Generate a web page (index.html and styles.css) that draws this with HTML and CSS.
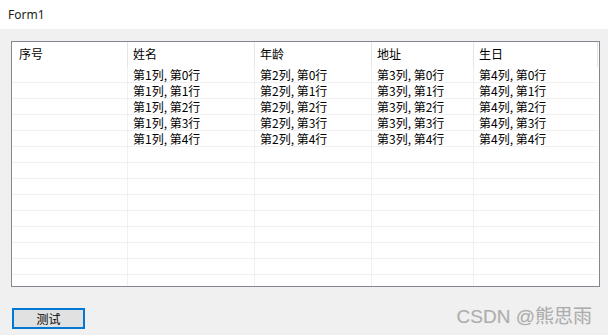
FILE: index.html
```html
<!DOCTYPE html>
<html>
<head>
<meta charset="utf-8">
<link rel="stylesheet" href="styles.css">
</head>
<body>
<div class="window">
  <div class="titlebar">Form1</div>
  <div class="client">
    <div class="listview">
      <div class="row head">
        <div class="cell first">序号</div>
        <div class="cell">姓名</div>
        <div class="cell">年龄</div>
        <div class="cell">地址</div>
        <div class="cell">生日</div>
        <div class="fill"></div>
      </div>
      <div class="row body"><div class="cell"></div><div class="cell">第1列, 第0行</div><div class="cell">第2列, 第0行</div><div class="cell">第3列, 第0行</div><div class="cell last">第4列, 第0行</div><div class="fill"></div></div>
      <div class="row body"><div class="cell"></div><div class="cell">第1列, 第1行</div><div class="cell">第2列, 第1行</div><div class="cell">第3列, 第1行</div><div class="cell last">第4列, 第1行</div><div class="fill"></div></div>
      <div class="row body"><div class="cell"></div><div class="cell">第1列, 第2行</div><div class="cell">第2列, 第2行</div><div class="cell">第3列, 第2行</div><div class="cell last">第4列, 第2行</div><div class="fill"></div></div>
      <div class="row body"><div class="cell"></div><div class="cell">第1列, 第3行</div><div class="cell">第2列, 第3行</div><div class="cell">第3列, 第3行</div><div class="cell last">第4列, 第3行</div><div class="fill"></div></div>
      <div class="row body"><div class="cell"></div><div class="cell">第1列, 第4行</div><div class="cell">第2列, 第4行</div><div class="cell">第3列, 第4行</div><div class="cell last">第4列, 第4行</div><div class="fill"></div></div>
      <div class="row body"><div class="cell"></div><div class="cell"></div><div class="cell"></div><div class="cell"></div><div class="cell last"></div><div class="fill"></div></div>
      <div class="row body"><div class="cell"></div><div class="cell"></div><div class="cell"></div><div class="cell"></div><div class="cell last"></div><div class="fill"></div></div>
      <div class="row body"><div class="cell"></div><div class="cell"></div><div class="cell"></div><div class="cell"></div><div class="cell last"></div><div class="fill"></div></div>
      <div class="row body"><div class="cell"></div><div class="cell"></div><div class="cell"></div><div class="cell"></div><div class="cell last"></div><div class="fill"></div></div>
      <div class="row body"><div class="cell"></div><div class="cell"></div><div class="cell"></div><div class="cell"></div><div class="cell last"></div><div class="fill"></div></div>
      <div class="row body"><div class="cell"></div><div class="cell"></div><div class="cell"></div><div class="cell"></div><div class="cell last"></div><div class="fill"></div></div>
      <div class="row body"><div class="cell"></div><div class="cell"></div><div class="cell"></div><div class="cell"></div><div class="cell last"></div><div class="fill"></div></div>
      <div class="row body"><div class="cell"></div><div class="cell"></div><div class="cell"></div><div class="cell"></div><div class="cell last"></div><div class="fill"></div></div>
      <div class="row body"><div class="cell"></div><div class="cell"></div><div class="cell"></div><div class="cell"></div><div class="cell last"></div><div class="fill"></div></div>
    </div>
    <button class="btn">测试</button>
  </div>
  <div class="watermark">CSDN @熊思雨</div>
</div>
</body>
</html>
```
FILE: styles.css
```css
html, body {
  margin: 0;
  padding: 0;
  background: #f0f0f0;
}
.window {
  position: relative;
  width: 608px;
  height: 335px;
  overflow: hidden;
  background: #f0f0f0;
  font-family: "Noto Sans CJK SC", sans-serif;
  font-size: 12px;
  color: #000;
}
.titlebar {
  height: 29px;
  background: #fff;
  padding-left: 8px;
  display: flex;
  align-items: center;
  font-family: "Noto Sans", "Open Sans", sans-serif;
  font-size: 12px;
  color: #1a1a1a;
  box-sizing: border-box;
  padding-bottom: 1px;
}
.client {
  padding: 12px 0 0 11px;
}
.listview {
  width: 589px;
  height: 246px;
  box-sizing: border-box;
  border: 1px solid #828790;
  background: #fff;
  overflow: hidden;
}
.row {
  display: grid;
  grid-template-columns: 116px 127px 117px 102px 124px 1fr;
}
.head {
  height: 25px;
}
.cell {
  box-sizing: border-box;
  padding-left: 5px;
  white-space: nowrap;
  overflow: hidden;
  display: flex;
  align-items: center;
  line-height: 1;
}
.head .cell {
  border-right: 1px solid #e5e5e5;
  height: 25px;
  padding-bottom: 1px;
}
.head .cell.first {
  padding-left: 7px;
}
.body .cell {
  height: 16px;
  border-right: 1px solid #f0f0f0;
  border-bottom: 1px solid #f0f0f0;
  padding-top: 1px;
}
.body .cell.last {
  border-right: none;
}
.btn {
  display: block;
  margin-top: 21px;
  margin-left: 1px;
  width: 73px;
  height: 21px;
  box-sizing: border-box;
  border: 2px solid #0078d7;
  background: #e1e1e1;
  font-family: "Noto Sans CJK SC", sans-serif;
  font-size: 12px;
  color: #000;
  padding: 0;
  line-height: 1;
}
.watermark {
  position: absolute;
  right: 16px;
  bottom: 7px;
  font-family: "Liberation Sans", "Noto Sans CJK SC", sans-serif;
  font-size: 19px;
  color: #adadad;
  text-shadow: 0 0 1px #e0e0e0;
}
```
